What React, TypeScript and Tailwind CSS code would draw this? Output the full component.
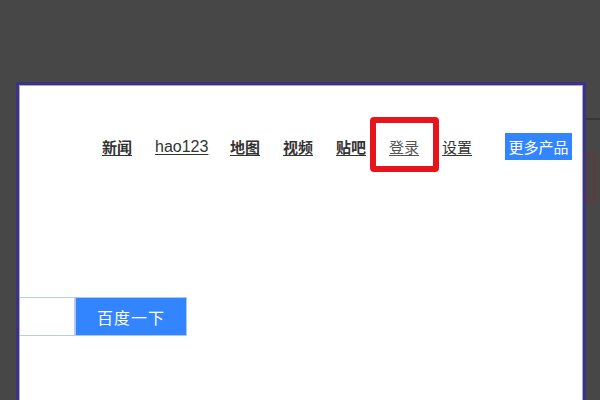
import React from 'react';

// Nav links shown in the top bar
type NavLink = {
  label: string;
  bold: boolean;
  latin?: boolean;
  width?: string;
  color?: string;
};

const links: NavLink[] = [
  { label: '新闻', bold: true },
  { label: 'hao123', bold: false, latin: true, width: 'w-[52px]' },
  { label: '地图', bold: true },
  { label: '视频', bold: true },
  { label: '贴吧', bold: true },
  { label: '登录', bold: false, color: 'text-[#555]' },
  { label: '设置', bold: false },
];

export default function App() {
  return (
    <div className="relative w-[600px] h-[400px] overflow-hidden bg-[#474747]">
      {/* things lying behind the window on the right */}
      <div className="absolute left-[586px] top-[118px] w-[20px] h-[2px] bg-[#383838]" />
      <div className="absolute left-[585px] top-[152px] w-[11px] h-[51px] border-[3px] border-[#5a3d3d]" />

      {/* browser window */}
      <div className="relative ml-[16px] pt-[82px]">
        <div className="w-[570px] h-[330px] border-[3px] border-b-0 border-[#3a3482]">
          <div className="h-full border border-b-0 border-[#aaa6d8] bg-white overflow-hidden">
            {/* top nav */}
            <div className="mt-[47px] pl-[82px] flex items-center h-[27px] font-['Noto_Sans_CJK_SC',sans-serif] text-[15px] leading-[20px]">
              <div className="flex items-center gap-[23px]">
                {links.map((link) => (
                  <a
                    key={link.label}
                    className={`underline underline-offset-2 ${link.width ?? ''} ${link.bold ? 'font-bold' : 'font-normal'} ${link.color ?? 'text-[#333]'} ${link.latin ? "font-['Liberation_Sans',sans-serif] text-[16px]" : ''}`}
                  >
                    {link.label}
                  </a>
                ))}
              </div>
              <div className="ml-[33px] h-[27px] w-[67px] flex items-center justify-center bg-[#3385ff] text-white text-[15px]">
                更多产品
              </div>
            </div>

            {/* search box */}
            <div className="mt-[137px] flex font-['Noto_Sans_CJK_SC',sans-serif]">
              <div className="w-[55px] h-[39px] border border-l-0 border-[#b6cdf0] bg-white" />
              <button className="w-[112px] h-[39px] bg-[#3385ff] border border-[#a9c8f5] text-white text-[16px] tracking-[1px]">
                百度一下
              </button>
            </div>
          </div>
        </div>
      </div>

      {/* red highlight around 登录 */}
      <div className="absolute left-[370px] top-[117px] w-[69px] h-[55px] border-[6px] border-[#e8141c] rounded-[4px]" />
    </div>
  );
}
